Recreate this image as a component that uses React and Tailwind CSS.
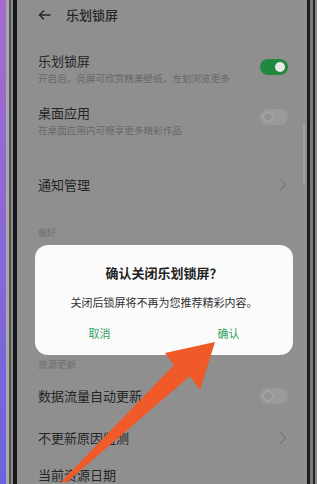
const font = { fontFamily: '"Noto Sans CJK SC", "Noto Sans", sans-serif' };

function Toggle({ on }) {
  if (on) {
    return (
      <div className="w-[28px] h-[16px] rounded-full bg-[#21893d] flex items-center justify-end pr-[3px] shrink-0">
        <div className="w-[10px] h-[10px] rounded-full bg-[#e9e9e9]" />
      </div>
    );
  }
  return (
    <div className="w-[28px] h-[16px] rounded-full bg-[#9a9a9a] flex items-center pl-[3px] shrink-0">
      <div className="w-[10px] h-[10px] rounded-full border-[1.5px] border-[#acacac] bg-[#939393]" />
    </div>
  );
}

function Chevron() {
  return (
    <svg width="8" height="14" viewBox="0 0 8 14" className="shrink-0">
      <path d="M1.5 1.5 L6.5 7 L1.5 12.5" fill="none" stroke="#7a7a7a" strokeWidth="1.3" strokeLinecap="round" strokeLinejoin="round" />
    </svg>
  );
}

function SwitchRow({ title, sub, on, toggleTop, className }) {
  return (
    <div className={`flex items-start justify-between ${className}`}>
      <div className="flex flex-col gap-[1px]">
        <div className="text-[13px] leading-[18px] text-[#252525]">{title}</div>
        {sub && <div className="text-[9.6px] leading-[14px] text-[#686868] whitespace-nowrap">{sub}</div>}
      </div>
      <div style={{ marginTop: toggleTop }}>
        <Toggle on={on} />
      </div>
    </div>
  );
}

function LinkRow({ title, className }) {
  return (
    <div className={`flex items-center justify-between h-[18px] pr-[1px] ${className}`}>
      <div className="text-[13px] leading-[18px] text-[#252525]">{title}</div>
      <Chevron />
    </div>
  );
}

export default function App() {
  return (
    <div className="relative w-[317px] h-[484px] overflow-hidden flex bg-[#8f8f8f]" style={font}>
      {/* left edge: background + bezel */}
      <div className="w-[6px] h-full bg-gradient-to-b from-[#a56bcd] to-[#6c62e0]" />
      <div className="w-[3px] h-full bg-[#a8a8a8]" />
      <div className="w-[2px] h-full bg-[#555]" />
      <div className="w-[2px] h-full bg-[#8a8a8a]" />
      <div className="w-[4px] h-full bg-[#151418]" />

      {/* screen */}
      <div className="relative flex-1 h-full bg-[#8f8f8f] pl-[21px] pr-[19px] flex flex-col">
        <div className="h-[30px] flex items-center gap-[15px]">
          <svg width="13" height="10" viewBox="0 0 13 10">
            <path d="M12 5 H1.5 M5.5 1 L1.5 5 L5.5 9" fill="none" stroke="#262626" strokeWidth="1.5" strokeLinecap="round" strokeLinejoin="round" />
          </svg>
          <div className="text-[13px] font-medium text-[#262626] leading-[18px]">乐划锁屏</div>
        </div>

        <SwitchRow className="mt-[23px]" title="乐划锁屏" sub="开启后，亮屏可欣赏精美壁纸，左划浏览更多" on toggleTop={7} />
        <SwitchRow className="mt-[19px]" title="桌面应用" sub="在桌面应用内可畅享更多精彩作品" on={false} toggleTop={5} />
        <LinkRow className="mt-[39px]" title="通知管理" />

        <div className="mt-[33px] text-[9px] leading-[12px] text-[#6e6e6e]">偏好</div>

        <div className="h-[121px]" />

        <div className="text-[9.5px] leading-[12px] text-[#6e6e6e]">资源更新</div>
        <div className="mt-[17px] flex items-center justify-between h-[18px]">
          <div className="text-[13px] leading-[18px] text-[#252525]">数据流量自动更新</div>
          <Toggle on={false} />
        </div>
        <LinkRow className="mt-[24px]" title="不更新原因监测" />
        <div className="mt-[19px] text-[13px] leading-[18px] text-[#252525]">当前资源日期</div>

        {/* scrollbar */}
        <div className="absolute right-[2px] top-[123px] w-[2px] h-[60px] rounded-full bg-[#a3a3a3]" />

        {/* dialog */}
        <div className="absolute left-[18px] top-[245px] w-[258px] h-[110px] rounded-[13px] bg-[#fbfbfb] flex flex-col items-center">
          <div className="mt-[19px] text-[13px] leading-[18px] font-bold text-[#222]">确认关闭乐划锁屏？</div>
          <div className="mt-[12px] text-[11px] leading-[16px] text-[#333]">关闭后锁屏将不再为您推荐精彩内容。</div>
          <div className="mt-[15px] w-full flex">
            <div className="flex-1 text-center text-[11px] leading-[16px] text-[#33a163]">取消</div>
            <div className="flex-1 text-center text-[11px] leading-[16px] text-[#33a163]">确认</div>
          </div>
        </div>
      </div>

      {/* right bezel */}
      <div className="w-[3px] h-full bg-[#1c1c1c]" />
      <div className="w-[3px] h-full bg-[#7c7c7c]" />
      <div className="w-[2px] h-full bg-[#222]" />
      <div className="w-[2px] h-full bg-[#8a8a8a]" />

      {/* orange arrow annotation */}
      <svg className="absolute left-0 top-0" width="317" height="484" viewBox="0 0 317 484">
        <polygon
          points="61,482 174,365 165,353 215,342 200,390 190,376 67,482"
          fill="#f05a28"
        />
      </svg>
    </div>
  );
}
